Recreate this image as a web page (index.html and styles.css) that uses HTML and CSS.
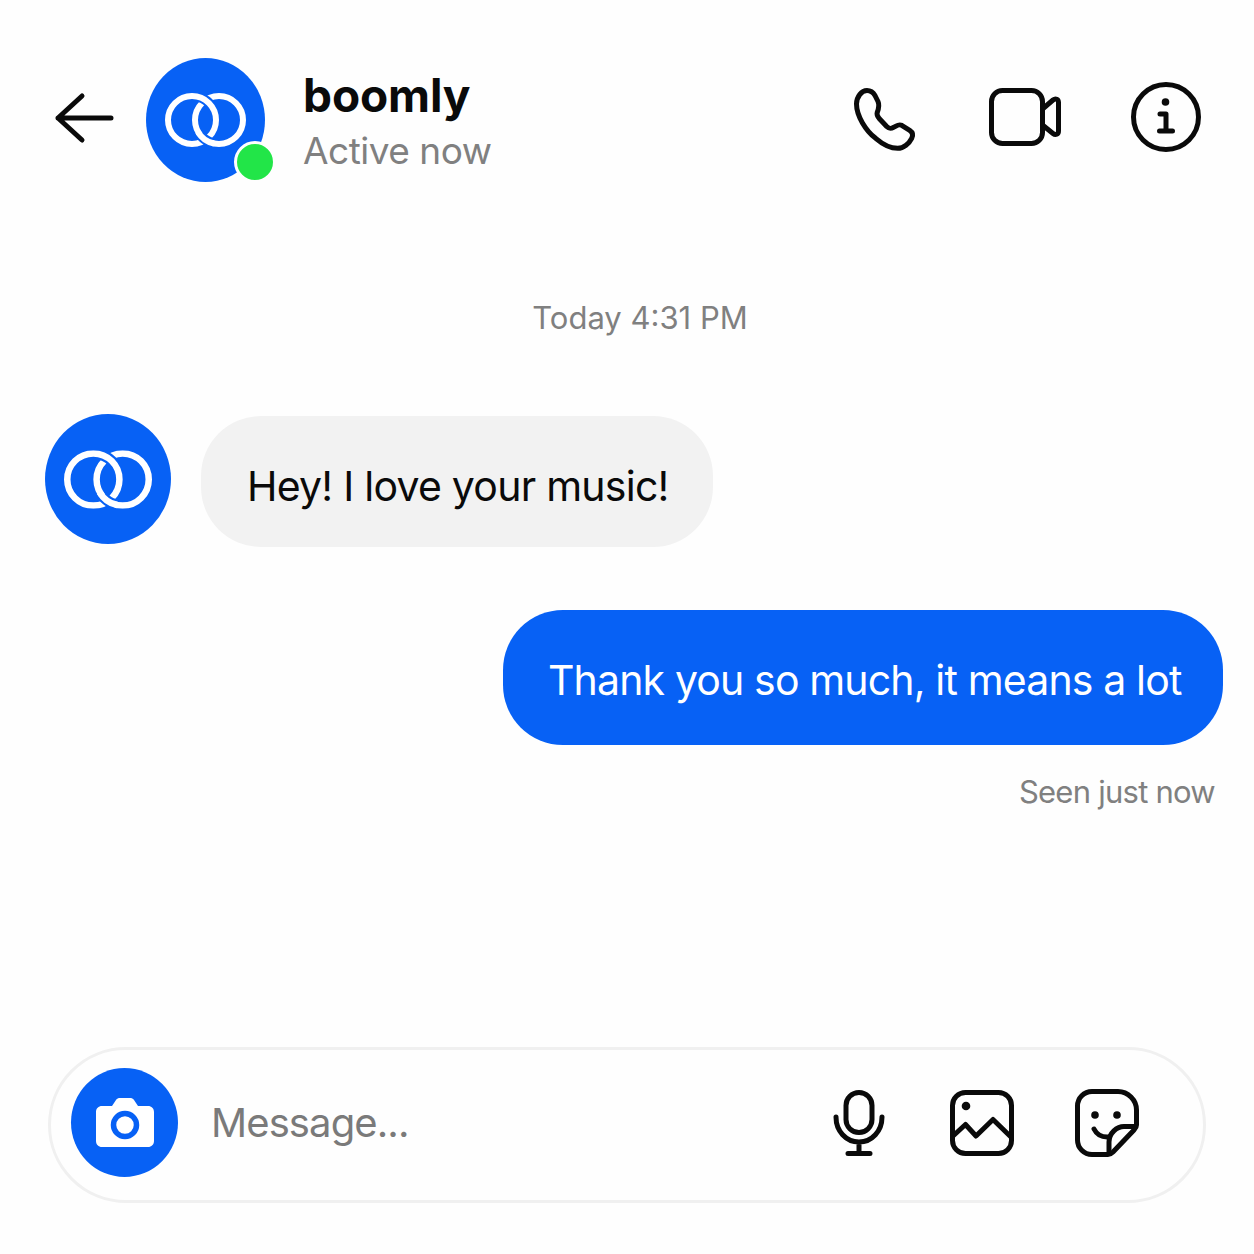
FILE: index.html
```html
<!DOCTYPE html>
<html lang="en">
<head>
<meta charset="utf-8">
<title>boomly</title>
<link rel="stylesheet" href="styles.css">
</head>
<body>
<svg class="defs" width="0" height="0" aria-hidden="true">
  <symbol id="rings" viewBox="0 0 81 54">
    <circle cx="54" cy="27" r="24" fill="none" stroke="#fff" stroke-width="6"/>
    <path d="M33.700 3.960A24 24 0 0 1 46 12.300" fill="none" stroke="#0761f5" stroke-width="10"/>
    <circle cx="27" cy="27" r="24" fill="none" stroke="#fff" stroke-width="6"/>
    <path d="M47.270 50.040A24 24 0 0 1 35 41.680" fill="none" stroke="#0761f5" stroke-width="10"/>
    <path d="M49 50.500A24 24 0 0 1 33 39" fill="none" stroke="#fff" stroke-width="6"/>
  </symbol>
</svg>
<main class="chat">
  <header class="top">
    <svg class="ic back" viewBox="0 0 58 50" width="58" height="50"><path d="M3 25H56M27 3 3 25l24 22" fill="none" stroke="#0a0a0a" stroke-width="5" stroke-linecap="round" stroke-linejoin="round"/></svg>
    <div class="av-wrap">
      <div class="av av-top"><svg width="81" height="54"><use href="#rings"/></svg></div>
      <span class="online"></span>
    </div>
    <div class="who">
      <div class="name">boomly</div>
      <div class="status">Active now</div>
    </div>
    <div class="actions">
      <svg class="ic phone" viewBox="0 0 64 64" width="64" height="64"><path d="M3.500 16C3.500 9 8.500 2.500 14 2.500c3.500 0 6 1.500 8 5l3 6c1.500 3.500 1 6.500-.8 11-.6 2 0 3.500 2 6l7.500 8c2.500 2.500 4 2.300 7 .8 3-1.500 5-3.500 8-2l8 5c3 2 3.500 5 2 8-2.500 5-8 10-14 10-7 0-15-4-22-10C13 43 3.500 28 3.500 16Z" fill="none" stroke="#0a0a0a" stroke-width="5" stroke-linejoin="round"/></svg>
      <svg class="ic" viewBox="0 0 72 58" width="72" height="58"><rect x="2.500" y="2.500" width="51" height="53" rx="11" fill="none" stroke="#0a0a0a" stroke-width="5"/><path d="M53.500 21 64 12c2.500-2 5.500-1 5.500 2.500v28.500c0 3.500-3 4.500-5.500 2.500L53.500 37" fill="none" stroke="#0a0a0a" stroke-width="5" stroke-linejoin="round"/></svg>
      <svg class="ic" viewBox="0 0 70 70" width="70" height="70"><circle cx="35" cy="35" r="32.500" fill="none" stroke="#0a0a0a" stroke-width="5"/><circle cx="34.500" cy="20" r="3.800" fill="#0a0a0a"/><path d="M29 32h6v17M28.500 49h13" fill="none" stroke="#0a0a0a" stroke-width="5" stroke-linecap="round" stroke-linejoin="round"/></svg>
    </div>
  </header>

  <div class="stamp">Today 4:31 PM</div>

  <div class="row-in">
    <div class="av av-msg"><svg width="88" height="59" viewBox="0 0 81 54"><use href="#rings"/></svg></div>
    <div class="bubble in">Hey! I love your music!</div>
  </div>

  <div class="row-out">
    <div class="bubble out">Thank you so much, it means a lot</div>
  </div>
  <div class="seen">Seen just now</div>

  <footer class="composer">
    <div class="cam">
      <svg viewBox="0 0 58 52" width="58" height="52"><path fill-rule="evenodd" fill="#fff" d="M6 9h10l4-6c1-1.500 2.500-2 4-2h10c1.500 0 3 .5 4 2l4 6h10c3.500 0 6 2.500 6 6v29c0 3.500-2.500 6-6 6H6c-3.500 0-6-2.500-6-6V15c0-3.500 2.500-6 6-6Z"/><circle cx="29" cy="28" r="11.500" fill="none" stroke="#0761f5" stroke-width="5.500"/></svg>
    </div>
    <div class="placeholder">Message...</div>
    <div class="tools">
      <svg class="ic mic" viewBox="0 0 52 66" width="52" height="66"><rect x="13" y="2.500" width="26" height="40" rx="13" fill="none" stroke="#0a0a0a" stroke-width="5"/><path d="M3 27c0 14 10 25 23 25s23-11 23-25M26 52v11M15 63.500h22" fill="none" stroke="#0a0a0a" stroke-width="5" stroke-linecap="round"/></svg>
      <svg class="ic" viewBox="0 0 64 66" width="64" height="66"><rect x="2.500" y="2.500" width="59" height="61" rx="13" fill="none" stroke="#0a0a0a" stroke-width="5"/><circle cx="16" cy="16" r="4.300" fill="#0a0a0a"/><path d="M3 46 15.500 34.500 26 46 43 29.500 61 47" fill="none" stroke="#0a0a0a" stroke-width="5" stroke-linejoin="round"/></svg>
      <svg class="ic" viewBox="0 0 64 68" width="64" height="68"><path d="M17 2.500h26c10 0 18.500 8.500 18.500 18.500v15c0 2-1 3.500-2.500 5L38 63c-1.500 1.500-3 2.500-5 2.500H17C9 65.500 2.500 59 2.500 51V17C2.500 9 9 2.500 17 2.500Z" fill="none" stroke="#0a0a0a" stroke-width="5" stroke-linejoin="round"/><path d="M34 64V53c0-9 8-15.500 15-15.500h12" fill="none" stroke="#0a0a0a" stroke-width="5"/><path d="M19 40c3 6 9 8.500 15 8" fill="none" stroke="#0a0a0a" stroke-width="5" stroke-linecap="round"/><circle cx="20" cy="26" r="3.800" fill="#0a0a0a"/><circle cx="42" cy="26" r="3.800" fill="#0a0a0a"/></svg>
    </div>
  </footer>
</main>
</body>
</html>
```
FILE: styles.css
```css
* { box-sizing: border-box; }
html, body { margin: 0; padding: 0; }
body { background: #fefefe; font-family: Inter, "Liberation Sans", sans-serif; color: #0a0a0a; }
.defs { position: absolute; }
.chat { width: 1254px; height: 1254px; display: flex; flex-direction: column; overflow: hidden; }
.ic { display: block; flex: none; overflow: visible; }

.top { display: flex; align-items: center; height: 124px; margin-top: 58px; padding-left: 55px; }
.back { margin-right: 33px; margin-bottom: 4px; }
.av { display: flex; align-items: center; justify-content: center; background: #0761f5; border-radius: 50%; flex: none; }
.av svg { display: block; }
.av-wrap { position: relative; flex: none; }
.av-top { width: 119px; height: 124px; }
.online { position: absolute; left: 88px; top: 83px; width: 42px; height: 42px; background: #22e548; border: 3px solid #fefefe; border-radius: 50%; }
.who { margin-left: 39px; margin-top: 6px; display: flex; flex-direction: column; }
.name { font-size: 46px; font-weight: 700; line-height: 56px; letter-spacing: -0.1px; margin-left: -1px; }
.status { font-size: 37px; line-height: 56px; color: #808080; letter-spacing: -0.5px; margin-left: -1px; }
.actions { margin-left: auto; margin-bottom: 6px; display: flex; align-items: center; gap: 70px; padding-right: 53px; }
.phone { margin: 5px 2px 0 0; }

.stamp { margin-top: 116px; padding-left: 26px; text-align: center; font-size: 31px; line-height: 40px; color: #808080; }

.row-in { display: flex; align-items: flex-start; margin-top: 76px; padding-left: 45px; gap: 30px; }
.av-msg { width: 126px; height: 130px; }
.bubble { display: flex; align-items: center; font-size: 41px; white-space: nowrap; letter-spacing: -0.75px; }
.in { height: 131px; width: 512px; padding: 9px 0 0 46px; background: #f2f2f2; border-radius: 60px; margin-top: 2px; }
.row-out { display: flex; justify-content: flex-end; margin-top: 63px; padding-right: 31px; }
.out { height: 135px; width: 720px; padding: 4px 0 0 45px; background: #0761f5; color: #fff; border-radius: 60px; letter-spacing: -0.85px; }
.seen { margin-top: 27px; padding-right: 39px; text-align: right; font-size: 31px; line-height: 40px; color: #808080; letter-spacing: -0.75px; }

.composer { display: flex; align-items: center; margin: auto 48px 51px; height: 156px; padding: 0 0 5px 20px; border: 3px solid #f0f0f0; border-radius: 78px; }
.cam { display: flex; align-items: center; justify-content: center; width: 107px; height: 109px; background: #0761f5; border-radius: 50%; flex: none; }
.placeholder { margin-left: 33px; font-size: 40px; color: #7a7a7a; letter-spacing: -0.9px; }
.tools { margin-left: auto; display: flex; align-items: center; gap: 61px; padding-right: 64px; }
.mic { margin-right: 4px; }
```
